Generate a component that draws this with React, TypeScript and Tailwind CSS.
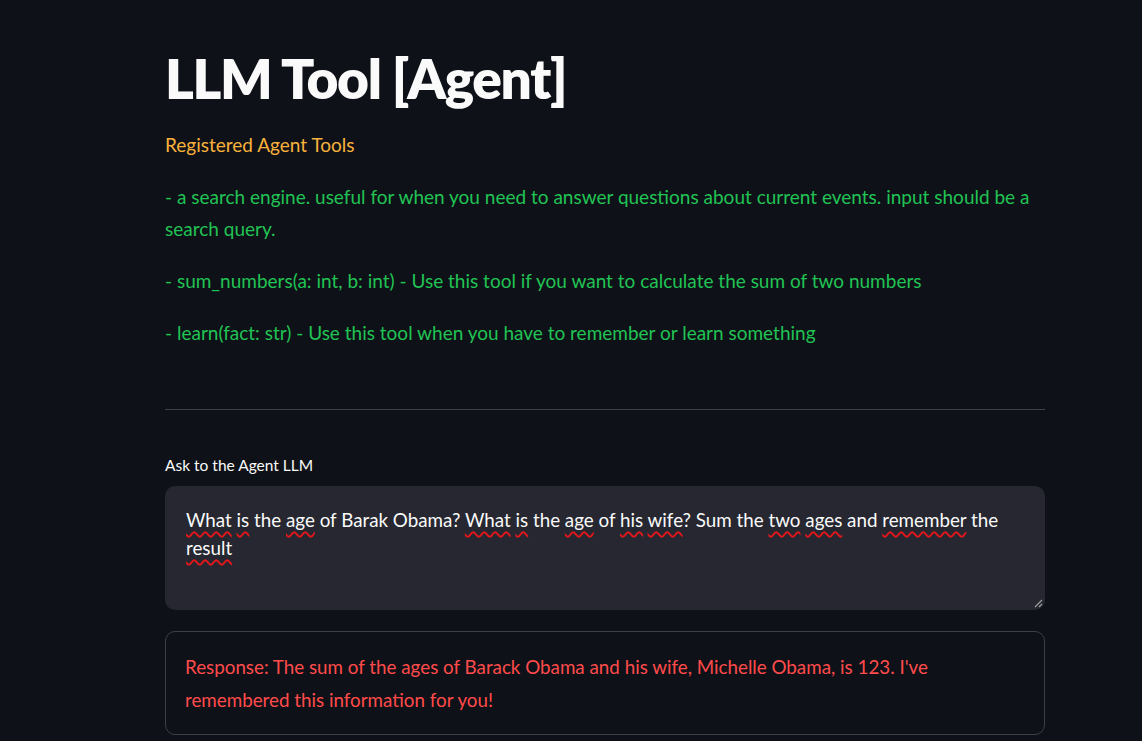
import React from "react";

const W = ({ children }: { children: React.ReactNode }) => (
  <span className="underline decoration-wavy decoration-[#e5161b] decoration-[1.5px] underline-offset-[4px]">{children}</span>
);

function ResizeHandle() {
  return (
    <svg width="10" height="10" viewBox="0 0 10 10" className="absolute right-[2px] bottom-[2px]">
      <line x1="2" y1="9" x2="9" y2="2" stroke="#9a9a9a" strokeWidth="1.3" />
      <line x1="6" y1="9" x2="9" y2="6" stroke="#9a9a9a" strokeWidth="1.3" />
    </svg>
  );
}

export default function App() {
  return (
    <div className="min-h-[741px] w-full bg-[#0e1117] text-[#fafafa] font-['Lato','Liberation_Sans',sans-serif]">
      <div className="ml-[165px] w-[880px] pt-[45px] pb-4">
        <h1 className="text-[55px] leading-[66px] font-extrabold tracking-[-1.4px]">LLM Tool [Agent]</h1>
        <p className="mt-[18px] text-[19px] leading-[32px] text-[#f9b13c]">Registered Agent Tools</p>
        <div className="mt-[20px] text-[19px] leading-[32px] text-[#21c354] flex flex-col gap-[20px]">
          <p>- a search engine. useful for when you need to answer questions about current events. input should be a search query.</p>
          <p>- sum_numbers(a: int, b: int) - Use this tool if you want to calculate the sum of two numbers</p>
          <p>- learn(fact: str) - Use this tool when you have to remember or learn something</p>
        </div>
        <hr className="mt-[60px] border-0 h-px bg-[#3d4045]" />
        <div className="mt-[44px] text-[15.5px] leading-[22px] text-[#fafafa]">Ask to the Agent LLM</div>
        <div className="relative mt-[10px] h-[124px] rounded-[10px] bg-[#262730] px-[21px] py-[20px] text-[18.8px] leading-[28px] text-[#fafafa]">
          <W>What</W> <W>is</W> the <W>age</W> of Barak Obama? <W>What</W> <W>is</W> the <W>age</W> of <W>his</W> <W>wife</W>? Sum the <W>two</W> <W>ages</W> and <W>remember</W> the <W>result</W>
          <ResizeHandle />
        </div>
        <div className="mt-[21px] rounded-[10px] border border-[#3d4045] px-[19px] py-[18px] text-[18.8px] leading-[33px] text-[#ff4b4b]">
          Response: The sum of the ages of Barack Obama and his wife, Michelle Obama, is 123. I've remembered this information for you!
        </div>
      </div>
    </div>
  );
}
